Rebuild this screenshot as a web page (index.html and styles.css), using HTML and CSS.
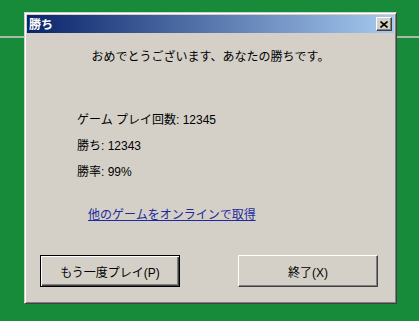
FILE: index.html
```html
<!DOCTYPE html>
<html lang="ja">
<head>
    <meta charset="UTF-8">
    <title>勝ち</title>
    <link rel="stylesheet" href="styles.css">
</head>
<body>
    <div class="dialog">
        <div class="titleBar">
            <span class="title">勝ち</span>
            <button class="closeBtn">
                <svg width="8" height="7" viewBox="0 0 8 7">
                    <path d="M0.5 0.5 L7.5 6.5 M7.5 0.5 L0.5 6.5" stroke="#000" stroke-width="1.6" fill="none"/>
                </svg>
            </button>
        </div>

        <div class="content">
            <p class="message">おめでとうございます、あなたの勝ちです。</p>

            <div class="stats">
                <div>ゲーム プレイ回数: 12345</div>
                <div>勝ち: 12343</div>
                <div>勝率: 99%</div>
            </div>

            <a class="onlineLink" href="#">他のゲームをオンラインで取得</a>

            <div class="buttons">
                <button class="btn default">もう一度プレイ(P)</button>
                <button class="btn">終了(X)</button>
            </div>
        </div>
    </div>
</body>
</html>
```

FILE: styles.css
```css
body{
    margin: 0;
    padding: 12px 0 0 24px;
    width: 419px;
    height: 321px;
    box-sizing: border-box;
    overflow: hidden;
    background: linear-gradient(to bottom, #178b3a 0, #178b3a 36px, #a9bca9 36px, #a9bca9 38px, #178b3a 38px);
    font-family: "Liberation Sans", "Noto Sans CJK JP", sans-serif;
    font-size: 12px;
    color: #000;
}

.dialog{
    width: 373px;
    height: 292px;
    box-sizing: border-box;
    background: #d4d0c8;
    border: 1px solid;
    border-color: #d4d0c8 #404040 #404040 #d4d0c8;
    box-shadow: inset 1px 1px #fff, inset -1px -1px #808080;
    padding: 2px;
    display: flex;
    flex-direction: column;
}

.titleBar{
    height: 18px;
    display: flex;
    align-items: center;
    justify-content: space-between;
    padding: 0 2px 0 2px;
    background: linear-gradient(to right, #0a246a, #a6caf0);
}

.title{
    color: #fff;
    font-weight: bold;
    font-family: "Noto Sans CJK JP", sans-serif;
    font-size: 12px;
    line-height: 18px;
}

.closeBtn{
    width: 16px;
    height: 14px;
    padding: 0;
    margin: 0;
    background: #d4d0c8;
    border: 1px solid;
    border-color: #fff #404040 #404040 #fff;
    box-shadow: inset -1px -1px #808080;
    display: flex;
    align-items: center;
    justify-content: center;
}

.content{
    flex: 1;
    display: flex;
    flex-direction: column;
}

.message{
    margin: 16px 0 0 0;
    line-height: 16px;
    text-align: center;
}

.stats{
    margin: 42px 0 0 50px;
    line-height: 26px;
}

.onlineLink{
    margin: 22px 0 0 61px;
    line-height: 16px;
    color: #1c2a9c;
    text-decoration: underline;
    align-self: flex-start;
}

.buttons{
    margin-top: 32px;
    padding: 0 16px 0 13px;
    display: flex;
    justify-content: space-between;
}

.btn{
    width: 140px;
    height: 32px;
    box-sizing: border-box;
    background: #d4d0c8;
    border: 1px solid;
    border-color: #fff #404040 #404040 #fff;
    box-shadow: inset -1px -1px #808080;
    font-family: "Liberation Sans", "Noto Sans CJK JP", sans-serif;
    font-size: 12px;
    color: #000;
    padding: 0;
}

.btn.default{
    border: 1px solid #000;
    box-shadow: inset 1px 1px #fff, inset -1px -1px #404040, inset -2px -2px #808080;
}
```
